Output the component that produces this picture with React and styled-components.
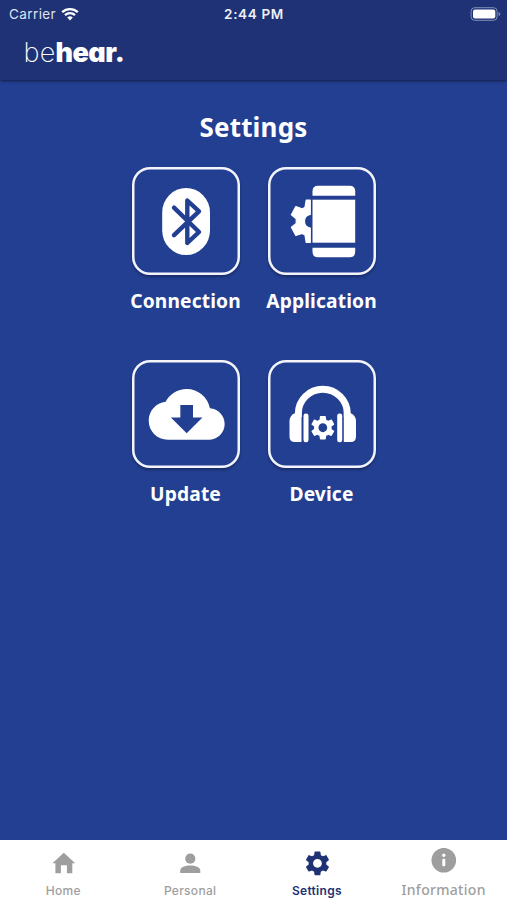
import React, { useState } from 'react';
import styled, { createGlobalStyle } from 'styled-components';

const GEAR =
  'M19.14 12.94c.04-.3.06-.61.06-.94 0-.32-.02-.64-.07-.94l2.03-1.58c.18-.14.23-.41.12-.61l-1.92-3.32c-.12-.22-.37-.29-.59-.22l-2.39.96c-.5-.38-1.03-.7-1.62-.94l-.36-2.54c-.04-.24-.24-.41-.48-.41h-3.84c-.24 0-.43.17-.47.41l-.36 2.54c-.59.24-1.13.57-1.62.94l-2.39-.96c-.22-.08-.47 0-.59.22L2.74 8.87c-.12.21-.08.47.12.61l2.03 1.58c-.05.3-.09.63-.09.94s.02.64.07.94l-2.03 1.58c-.18.14-.23.41-.12.61l1.92 3.32c.12.22.37.29.59.22l2.39-.96c.5.38 1.03.7 1.62.94l.36 2.54c.05.24.24.41.48.41h3.84c.24 0 .44-.17.47-.41l.36-2.54c.59-.24 1.13-.56 1.62-.94l2.39.96c.22.08.47 0 .59-.22l1.92-3.32c.12-.22.07-.47-.12-.61l-2.01-1.58zM12 15.6c-1.98 0-3.6-1.62-3.6-3.6s1.62-3.6 3.6-3.6 3.6 1.62 3.6 3.6-1.62 3.6-3.6 3.6z';

const BluetoothIcon = () => (
  <TileIcon viewBox="0 0 108 108">
    <rect x="30.2" y="21" width="47.8" height="67" rx="23.9" ry="24.5" />
    <path
      d="M42 40.7 L67 65 L55.3 76 V33.5 L67 44.3 L42 68.2"
      fill="none"
      stroke="#233f92"
      strokeWidth="4.4"
      strokeLinecap="round"
      strokeLinejoin="round"
    />
  </TileIcon>
);

const ApplicationIcon = () => (
  <TileIcon viewBox="0 0 108 108">
    <path
      d="M42.3 33H38.2L37 40.3 34.2 41.9 27.8 39.6 23.4 47.8 28.2 51.8V56.4L23.4 60.2 27.8 68.5 34.2 66.4 37 68.1 38.2 75.4H42.3V61.2A7 7 0 0 1 42.3 47.4z"
      stroke="#fff"
      strokeWidth="1.2"
      strokeLinejoin="round"
    />
    <path d="M44.5 28.7v-4.5q0-5.5 5.5-5.5h31.7q5.5 0 5.5 5.5v4.5z" />
    <rect x="44.5" y="32.7" width="42.7" height="43" />
    <path d="M44.5 80.7v4q0 5.5 5.5 5.5h31.7q5.5 0 5.5-5.5v-4z" />
  </TileIcon>
);

const CloudIcon = () => (
  <TileIcon viewBox="0 0 108 108">
    <path
      transform="translate(16.7 16.4) scale(3.165)"
      d="M19.35 10.04C18.67 6.59 15.64 4 12 4 9.11 4 6.6 5.64 5.35 8.04 2.34 8.36 0 10.91 0 14c0 3.31 2.69 6 6 6h13c2.76 0 5-2.24 5-5 0-2.64-2.05-4.78-4.65-4.96zM17 13l-5 5-5-5h3V9h4v4h3z"
    />
  </TileIcon>
);

const HeadphonesIcon = () => (
  <TileIcon viewBox="0 0 108 108">
    <path
      d="M30.3 57V53.7a24.5 24.5 0 0 1 49 0V57"
      fill="none"
      stroke="#fff"
      strokeWidth="7"
    />
    <path d="M26.8 53.3h6.7V82H27q-5.5 0-5.5-5.5V61.5q0-6 5.3-8.2z" />
    <path d="M82.7 53.3h-6.9V82h6.7q5.5 0 5.5-5.5V61.5q0-6-5.3-8.2z" />
    <rect x="35.5" y="53.5" width="5" height="28.8" rx="2.2" />
    <rect x="69.2" y="53.5" width="5" height="28.8" rx="2.2" />
    <path d={GEAR} transform="translate(40.2 53.1) scale(1.22)" />
  </TileIcon>
);

const tiles = [
  { name: 'Connection', icon: <BluetoothIcon /> },
  { name: 'Application', icon: <ApplicationIcon /> },
  { name: 'Update', icon: <CloudIcon /> },
  { name: 'Device', icon: <HeadphonesIcon /> }
];

const tabs = [
  {
    name: 'Home',
    icon: <path d="M15.8 4.7 27.2 15.3h-2.9V25.2h-5.4v-7.9h-6V25.2H7.4v-9.9H4.4z" />
  },
  {
    name: 'Personal',
    icon: (
      <>
        <circle cx="15.3" cy="10.7" r="5.1" />
        <path d="M5.2 25v-2.2c0-3.6 5-5.2 10-5.2s10.1 1.6 10.1 5.2V25z" />
      </>
    )
  },
  {
    name: 'Settings',
    icon: <path d={GEAR} transform="translate(0.7 0.6) scale(1.23)" />
  },
  {
    name: 'Information',
    large: true,
    icon: (
      <>
        <circle cx="14.8" cy="12.2" r="12.3" />
        <circle cx="14.8" cy="7.3" r="1.7" fill="#fff" />
        <rect x="13.3" y="10.8" width="3" height="7.4" rx="1" fill="#fff" />
      </>
    )
  }
];

const App = () => {
  const [activeTab, setActiveTab] = useState('Settings');

  return (
    <>
      <GlobalStyle />
      <Screen>
        <Header>
          <StatusBar>
            <Carrier>
              Carrier
              <WifiIcon viewBox="0 0 18 14">
                <path d="M1.2 5.2a11.2 11.2 0 0 1 15.6 0M4 8.1a7.2 7.2 0 0 1 10 0" />
                <path d="M9 13.4 6.2 10.5a4.1 4.1 0 0 1 5.6 0z" stroke="none" fill="#fff" />
              </WifiIcon>
            </Carrier>
            <Clock>2:44 PM</Clock>
            <Battery>
              <BatteryIcon viewBox="0 0 31 14">
                <rect x="1.1" y="0.7" width="26" height="12.6" rx="3.6" fill="none" stroke="#8290b8" />
                <rect x="3" y="2.6" width="22.3" height="8.8" rx="2" fill="#fff" />
                <path d="M28.6 5v4q1.7-.5 1.7-2t-1.7-2z" fill="#8290b8" />
              </BatteryIcon>
            </Battery>
          </StatusBar>
          <Logo>
            <LogoThin>be</LogoThin>
            <LogoBold>hear.</LogoBold>
          </Logo>
        </Header>

        <Content>
          <Title>Settings</Title>
          <TileGrid>
            {tiles.map((tile) => (
              <TileItem key={tile.name}>
                <Tile>{tile.icon}</Tile>
                <TileLabel>{tile.name}</TileLabel>
              </TileItem>
            ))}
          </TileGrid>
        </Content>

        <TabBar>
          {tabs.map((tab) => (
            <TabButton
              key={tab.name}
              $active={tab.name === activeTab}
              onClick={() => setActiveTab(tab.name)}
            >
              <TabIcon viewBox="0 0 30 30">{tab.icon}</TabIcon>
              <TabLabel $large={tab.large} $active={tab.name === activeTab}>
                {tab.name}
              </TabLabel>
            </TabButton>
          ))}
        </TabBar>
      </Screen>
    </>
  );
};

const GlobalStyle = createGlobalStyle`
  * {
    box-sizing: border-box;
  }

  body {
    margin: 0;
    background-color: #233f92;
  }
`;

const Screen = styled.div`
  display: flex;
  flex-direction: column;
  width: 100%;
  height: 100vh;
  overflow: hidden;
  background-color: #233f92;
  color: #fff;
  font-family: 'Noto Sans', sans-serif;
`;

const Header = styled.header`
  height: 80px;
  flex-shrink: 0;
  background-color: #1e3275;
  box-shadow: 0 1px 3px rgba(0, 0, 0, 0.55);
`;

const StatusBar = styled.div`
  display: grid;
  grid-template-columns: 1fr auto 1fr;
  align-items: center;
  height: 27px;
  padding: 0 6px 0 9px;
  font-family: Inter, sans-serif;
  font-size: 13.5px;
`;

const Carrier = styled.div`
  display: flex;
  align-items: center;
  gap: 5px;
  color: #dfe3ef;
  letter-spacing: 0.4px;
`;

const WifiIcon = styled.svg`
  width: 18px;
  height: 14px;
  fill: none;
  stroke: #fff;
  stroke-width: 2.3;
`;

const Clock = styled.div`
  margin-right: 2px;
  font-weight: 600;
  letter-spacing: 0.65px;
  color: #eef0f7;
`;

const Battery = styled.div`
  display: flex;
  justify-content: flex-end;
`;

const BatteryIcon = styled.svg`
  width: 31px;
  height: 14px;
`;

const Logo = styled.div`
  display: flex;
  align-items: baseline;
  padding-left: 23.5px;
  font-family: Inter, sans-serif;
  font-size: 27px;
  line-height: 52px;
  font-feature-settings: 'cv11';
`;

const LogoThin = styled.span`
  font-weight: 250;
  letter-spacing: 0.2px;
`;

const LogoBold = styled.span`
  font-weight: 900;
  letter-spacing: -0.5px;
`;

const Content = styled.main`
  flex: 1;
  display: flex;
  flex-direction: column;
  align-items: center;
`;

const Title = styled.h1`
  margin: 27px 0 20px;
  font-size: 26px;
  line-height: 40px;
  font-weight: 700;
  letter-spacing: 0.2px;
`;

const TileGrid = styled.div`
  display: grid;
  grid-template-columns: 108px 108px;
  column-gap: 28px;
  row-gap: 46px;
`;

const TileItem = styled.div`
  display: flex;
  flex-direction: column;
  align-items: center;
  height: 147px;
`;

const Tile = styled.div`
  display: flex;
  align-items: center;
  justify-content: center;
  width: 108px;
  height: 108px;
  flex-shrink: 0;
  border-radius: 18px;
  background-color: #233f92;
  box-shadow: inset 0 0 0 2.5px #f3f5fb, 0 2px 3px rgba(0, 0, 0, 0.3);
`;

const TileIcon = styled.svg`
  width: 108px;
  height: 108px;
  flex-shrink: 0;
  fill: #fff;
`;

const TileLabel = styled.div`
  margin-top: 13px;
  font-size: 19.2px;
  line-height: 26px;
  font-weight: 700;
  white-space: nowrap;
  letter-spacing: 0.15px;
`;

const TabBar = styled.nav`
  display: grid;
  grid-template-columns: repeat(4, 1fr);
  height: 60px;
  flex-shrink: 0;
  background-color: #fff;
`;

const TabButton = styled.button`
  display: flex;
  flex-direction: column;
  align-items: center;
  padding: 8px 0 0;
  border: none;
  background: none;
  color: ${props => props.$active ? '#1e3275' : '#9e9e9e'};
  cursor: pointer;
`;

const TabIcon = styled.svg`
  width: 30px;
  height: 30px;
  fill: currentColor;
`;

const TabLabel = styled.span`
  margin-top: ${props => props.$large ? '2px' : '3px'};
  font-family: ${props => props.$large ? "'Noto Sans'" : 'Inter'}, sans-serif;
  font-size: ${props => props.$large ? '14px' : '12px'};
  line-height: 20px;
  font-weight: ${props => props.$active ? 600 : 500};
  letter-spacing: 0.3px;
  white-space: nowrap;
`;

export default App;
